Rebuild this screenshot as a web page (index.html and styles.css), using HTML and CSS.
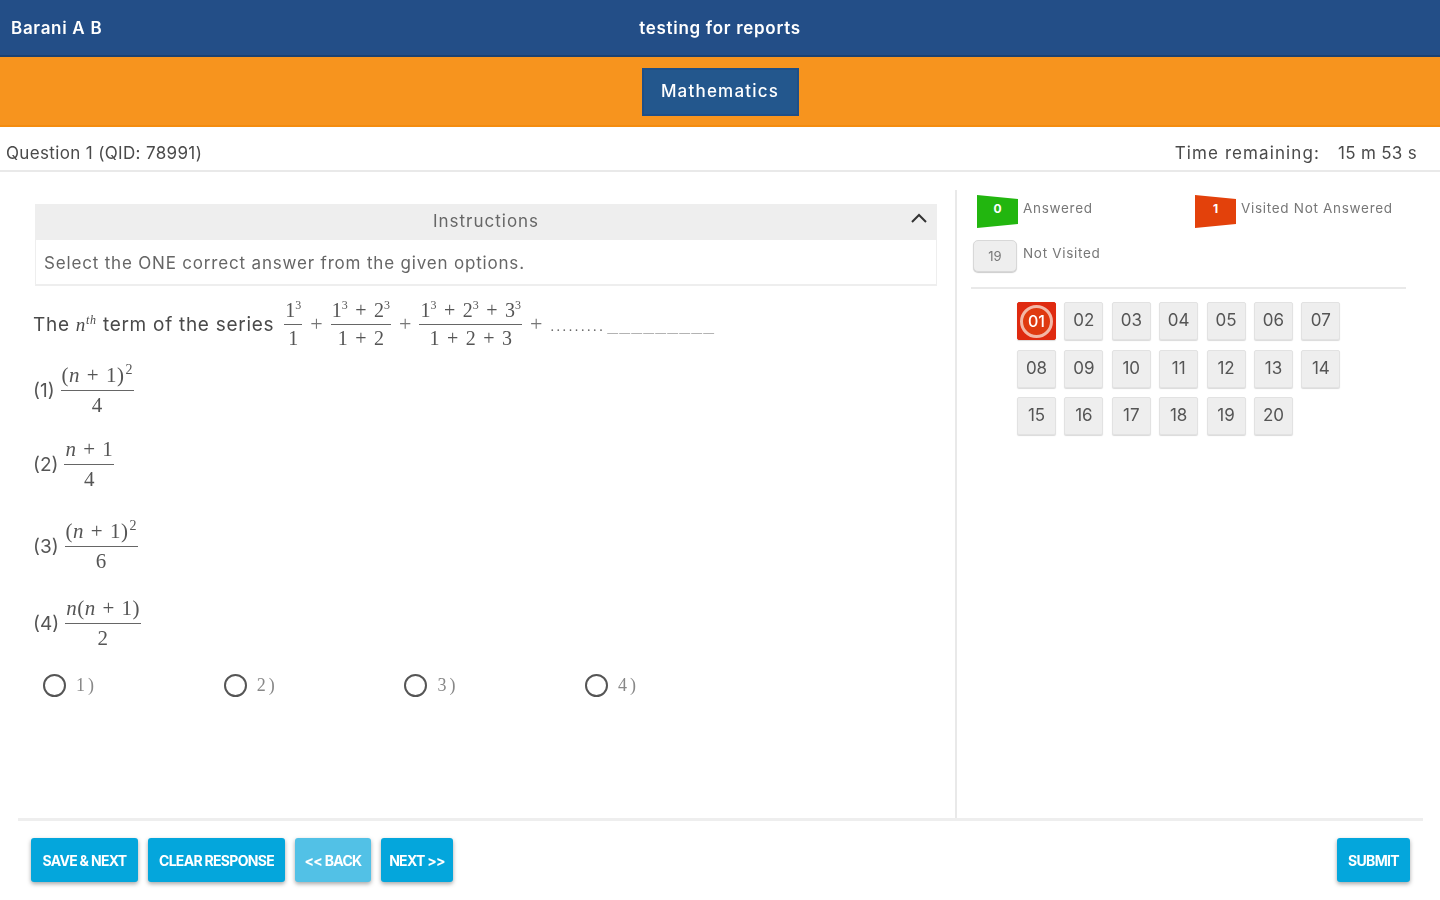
FILE: index.html
```html
<!DOCTYPE html>
<html lang="en">
<head>
<meta charset="utf-8">
<title>testing for reports</title>
<link rel="stylesheet" href="styles.css">
</head>
<body>
<div class="page">
  <header class="topbar">
    <div class="student">Barani A B</div>
    <div class="test-name">testing for reports</div>
    <div></div>
  </header>
  <nav class="subjectbar"><button class="subject">Mathematics</button></nav>
  <div class="qbar">
    <div class="qlabel">Question 1 (QID: 78991)</div>
    <div class="timer"><span class="time-label">Time remaining:</span><span>15 m 53 s</span></div>
  </div>
  <main class="main">
    <section class="left">
      <div class="instructions">
        <div class="ins-head">Instructions
          <svg class="chev" width="18" height="12" viewBox="0 0 18 12"><path d="M2 10 L9 3 L16 10" fill="none" stroke="#333" stroke-width="2"/></svg>
        </div>
        <div class="ins-body">Select the ONE correct answer from the given options.</div>
      </div>
      <div class="question">
        <span class="qtext">The <i class="mi">n</i><sup class="th">th</sup> term of the series</span>
        <span class="frac"><span><span class="m">1<sup>3</sup></span></span><span class="den m">1</span></span>
        <span class="op">+</span>
        <span class="frac"><span><span class="m">1<sup>3</sup> + 2<sup>3</sup></span></span><span class="den m">1 + 2</span></span>
        <span class="op">+</span>
        <span class="frac"><span><span class="m">1<sup>3</sup> + 2<sup>3</sup> + 3<sup>3</sup></span></span><span class="den m">1 + 2 + 3</span></span>
        <span class="op">+</span>
        <span class="dots">.........</span><span class="dashes">_________</span>
      </div>
      <div class="options">
        <div class="opt"><span class="num">(1)</span><span class="frac"><span><span class="m">(<i>n</i> + 1)<sup>2</sup></span></span><span class="den m">4</span></span></div>
        <div class="opt"><span class="num">(2)</span><span class="frac"><span><span class="m"><i>n</i> + 1</span></span><span class="den m">4</span></span></div>
        <div class="opt"><span class="num">(3)</span><span class="frac"><span><span class="m">(<i>n</i> + 1)<sup>2</sup></span></span><span class="den m">6</span></span></div>
        <div class="opt"><span class="num">(4)</span><span class="frac"><span><span class="m"><i>n</i>(<i>n</i> + 1)</span></span><span class="den m">2</span></span></div>
      </div>
      <div class="answers">
        <label class="answer"><input type="radio" name="a"><span>1)</span></label>
        <label class="answer"><input type="radio" name="a"><span>2)</span></label>
        <label class="answer"><input type="radio" name="a"><span>3)</span></label>
        <label class="answer"><input type="radio" name="a"><span>4)</span></label>
      </div>
    </section>
    <aside class="panel">
      <div class="legend">
        <div class="leg"><span class="flag green">0</span><span class="leg-text">Answered</span></div>
        <div class="leg"><span class="flag red">1</span><span class="leg-text">Visited Not Answered</span></div>
        <div class="leg"><span class="box">19</span><span class="leg-text">Not Visited</span></div>
      </div>
      <div class="tiles">
        <button class="tile current"><span>01</span></button>
        <button class="tile">02</button><button class="tile">03</button><button class="tile">04</button>
        <button class="tile">05</button><button class="tile">06</button><button class="tile">07</button>
        <button class="tile">08</button><button class="tile">09</button><button class="tile">10</button>
        <button class="tile">11</button><button class="tile">12</button><button class="tile">13</button>
        <button class="tile">14</button><button class="tile">15</button><button class="tile">16</button>
        <button class="tile">17</button><button class="tile">18</button><button class="tile">19</button>
        <button class="tile">20</button>
      </div>
    </aside>
  </main>
  <footer class="footer">
    <div class="actions">
      <button class="btn save">SAVE &amp; NEXT</button>
      <button class="btn clear">CLEAR RESPONSE</button>
      <button class="btn back">&lt;&lt; BACK</button>
      <button class="btn next">NEXT &gt;&gt;</button>
    </div>
    <button class="btn submit">SUBMIT</button>
  </footer>
</div>
</body>
</html>
```

FILE: styles.css
```css
* { box-sizing: border-box; }
html, body { margin: 0; padding: 0; background: #fff; }
body { font-family: Inter, "Open Sans", sans-serif; color: #4a4a4a; }
button { font-family: inherit; cursor: pointer; }
.page { width: 1440px; height: 900px; overflow: hidden; display: flex; flex-direction: column; filter: blur(0.6px); }

.topbar { height: 57px; flex: none; background: #234e87; border-bottom: 2px solid #1c4170; color: #fff; display: grid; grid-template-columns: 1fr auto 1fr; align-items: center; padding: 0 11px; font-size: 17px; font-weight: 600; letter-spacing: 0.7px; }
.subjectbar { height: 70px; flex: none; background: #f7941e; border-bottom: 2px solid #f48c0f; display: flex; justify-content: center; align-items: center; }
.subject { width: 157px; height: 48px; margin-top: 2px; padding: 0 0 2px; background: #23578d; border: 2px solid #1f4f86; color: #fff; font-size: 17px; font-weight: 500; letter-spacing: 1.2px; }
.qbar { height: 45px; flex: none; border-bottom: 2px solid #e9e9e9; display: flex; justify-content: space-between; align-items: center; padding: 9px 23px 0 6px; font-size: 17px; }
.qlabel { letter-spacing: 0.35px; }
.timer { display: flex; gap: 18px; letter-spacing: 0.3px; }
.time-label { letter-spacing: 1.1px; }

.main { flex: 1; display: flex; min-height: 0; }
.left { width: 937px; margin-left: 18px; padding: 32px 18px 0 17px; flex: none; }
.instructions { width: 902px; }
.ins-head { height: 36px; background: #eee; display: flex; align-items: center; justify-content: center; position: relative; padding-bottom: 2px; font-size: 17px; color: #666; letter-spacing: 1px; }
.chev { position: absolute; right: 9px; top: 8px; }
.ins-body { height: 46px; border: 1px solid #eee; border-top: 0; border-bottom-width: 2px; display: flex; align-items: center; padding: 2px 8px 0; font-size: 17px; color: #666; letter-spacing: 0.82px; }

.question { display: flex; align-items: center; height: 68px; margin-left: -2px; padding-top: 8px; font-size: 19px; }
.qtext { margin-right: 10px; letter-spacing: 0.72px; }
.mi { font-family: "Liberation Serif", serif; }
.th { font-family: "Liberation Serif", serif; font-style: italic; font-size: 12px; line-height: 0; }
.frac { display: inline-flex; flex-direction: column; align-items: center; font-family: "Liberation Serif", serif; font-size: 20px; line-height: 27px; word-spacing: 2.5px; color: #555; }
.frac > span { padding: 0 1px; white-space: nowrap; }
.frac sup { font-size: 12px; line-height: 0; }
.den { border-top: 1px solid #666; width: 100%; text-align: center; }
.op { font-family: "Liberation Serif", serif; font-size: 22px; margin: 0 8px; color: #777; }
.dots { font-family: "Liberation Serif", serif; font-size: 14px; margin: 6px 2px 0 0; letter-spacing: 2.6px; color: #666; }
.dashes { font-family: "Liberation Mono", monospace; font-size: 18px; font-weight: 700; letter-spacing: 1.2px; color: #aaa; margin-top: 6px; }

.options { display: grid; grid-template-rows: 72px 76px 88px 66px; margin-left: -2px; }
.opt { display: flex; align-items: center; gap: 6px; font-size: 19px; }
.opt .frac { font-size: 21px; line-height: 29px; letter-spacing: 0.5px; word-spacing: 1px; }
.opt .frac sup { font-size: 14px; margin-left: 1px; }
.num { font-family: Inter, sans-serif; color: #555; }

.answers { display: grid; grid-template-columns: repeat(4, 180.7px); margin-top: 18px; margin-left: 8px; }
.answer { display: flex; align-items: center; gap: 10px; font-family: "Liberation Serif", serif; font-size: 18px; letter-spacing: 3px; color: #888; }
.answer input { appearance: none; margin: 0; width: 23px; height: 23px; border: 2px solid #555; border-radius: 50%; background: #fff; }

.panel { flex: 1; margin-top: 18px; border-left: 2px solid #e9e9e9; padding: 5px 0 0 14px; }
.legend { display: grid; grid-template-columns: 218px auto; row-gap: 12px; width: 435px; height: 94px; border-bottom: 2px solid #e9e9e9; padding-left: 2px; align-content: start; }
.leg { display: flex; gap: 5px; align-items: flex-start; font-size: 13.5px; color: #777; }
.leg-text { padding-top: 5px; letter-spacing: 0.7px; }
.flag { margin-left: 4px; width: 41px; height: 33px; display: flex; align-items: center; justify-content: center; color: #fff; font-size: 12px; font-weight: 700; padding-bottom: 7px; clip-path: polygon(0 0, 100% 12%, 100% 88%, 0 100%); }
.green { background: #22b60f; }
.red { background: #e3410b; }
.box { width: 44px; height: 32px; margin-right: 1px; background: #eee; border: 1px solid #d8d8d8; border-radius: 5px; box-shadow: 0 1px 1px rgba(0,0,0,.2); display: flex; align-items: center; justify-content: center; font-size: 13px; color: #777; }

.tiles { display: grid; grid-template-columns: repeat(7, 39px); grid-auto-rows: 38px; column-gap: 8.4px; row-gap: 9.5px; margin: 13px 0 0 46px; }
.tile { padding: 0 0 2px; background: #eee; border: 1px solid #e2e2e2; border-radius: 2px; box-shadow: 0 1px 1px rgba(0,0,0,.15); color: #555; font-size: 17px; display: flex; align-items: center; justify-content: center; }
.current { padding: 0; background: #df2a10; border-color: #df2a10; }
.current span { width: 33px; height: 33px; border-radius: 50%; background: #df3a10; border: 3px solid #f2b7a6; color: #fff; font-weight: 500; font-size: 16px; display: flex; align-items: center; justify-content: center; }

.footer { height: 82px; flex: none; margin: 0 17px 0 18px; border-top: 3px solid #eee; display: flex; justify-content: space-between; padding: 17px 13px 0; }
.actions { display: flex; gap: 10px; }
.btn { height: 44px; border: 0; border-radius: 3px; background: #04a6dc; color: #fff; font-size: 14px; font-weight: 700; padding: 0; letter-spacing: -0.7px; box-shadow: 0 2px 4px rgba(0,0,0,.35); }
.save { width: 107px; }
.clear { width: 137px; }
.back { width: 76px; background: #52c1e6; }
.next { width: 72px; }
.submit { width: 73px; }
```
